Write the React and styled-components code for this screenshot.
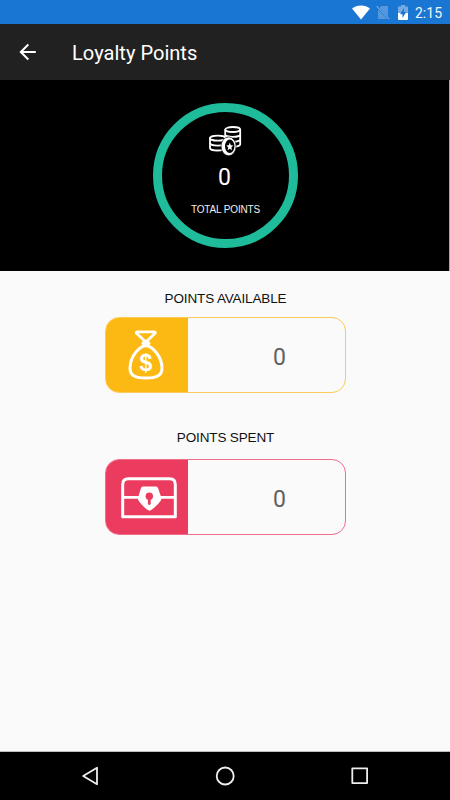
import React from "react";
import styled, { createGlobalStyle } from "styled-components";

const GlobalStyle = createGlobalStyle`
  * {
    box-sizing: border-box;
  }

  body {
    margin: 0;
    background: #fafafa;
  }
`;

export default function App() {
  return (
    <Screen>
      <GlobalStyle />
      <StatusBar>
        <WifiIcon />
        <NoSimIcon />
        <BatteryIcon />
        <Clock>2:15</Clock>
      </StatusBar>

      <AppBar>
        <BackIcon />
        <Title>Loyalty Points</Title>
      </AppBar>

      <Hero>
        <Ring>
          <CoinsIcon />
          <Total>0</Total>
          <TotalLabel>TOTAL POINTS</TotalLabel>
        </Ring>
      </Hero>

      <Content>
        <PointsCard label="POINTS AVAILABLE" value={0} color="#fdb913" line="#fdcb58" gap={9} iconPad="0 1px 1px 0" valueLine={80}>
          <MoneyBagIcon />
        </PointsCard>
        <PointsCard label="POINTS SPENT" value={0} color="#eb3b5f" line="#ee6f8a" gap={12} iconPad="1px 0 0 4px" valueLine={79}>
          <ChestIcon />
        </PointsCard>
      </Content>

      <NavBar>
        <NavIcon>
          <path d="M19 3.8v16.4L5.2 12z" />
        </NavIcon>
        <NavIcon>
          <circle cx="12.2" cy="12" r="8.5" />
        </NavIcon>
        <NavIcon>
          <path d="M4.3 4.3h14.8v14.8H4.3z" />
        </NavIcon>
      </NavBar>
    </Screen>
  );
}

function PointsCard({ label, value, color, line, gap, iconPad, valueLine, children }) {
  return (
    <Group>
      <GroupLabel $gap={gap}>{label}</GroupLabel>
      <Card $line={line}>
        <CardIcon $color={color} $pad={iconPad}>{children}</CardIcon>
        <CardValue $line={valueLine}>{value}</CardValue>
      </Card>
    </Group>
  );
}

// Icons

function WifiIcon() {
  return (
    <svg width="18" height="15" viewBox="0 0 18 15">
      <path d="M0 3.5C5 -.6 13 -.6 18 3.5L9 14.5z" fill="#fff" />
    </svg>
  );
}

function NoSimIcon() {
  return (
    <svg width="14" height="15" viewBox="0 0 14 15">
      <path d="M5.2 1H12v10.8L3.6 3z" fill="#5598de" />
      <path d="M2 4.4L11.3 14H2z" fill="#5598de" />
      <path d="M.6 1.2l12.6 13" stroke="#75abe5" strokeWidth="1.1" />
    </svg>
  );
}

function BatteryIcon() {
  return (
    <svg width="10" height="15" viewBox="0 0 10 15">
      <path d="M3 0h4v1.6h2.2q.8 0 .8.8V8H0V2.4q0-.8.8-.8H3z" fill="#75abe5" />
      <path d="M0 8h10v6q0 1-1 1H1q-1 0-1-1z" fill="#fff" />
      <path d="M6 3L2 9.2h2.5V13L8.2 7H6z" fill="#1976d2" />
    </svg>
  );
}

function BackIcon() {
  return (
    <svg width="18" height="18" viewBox="0 0 18 18" fill="none" stroke="#fff" strokeWidth="2">
      <path d="M16.8 9H2.4M9.3 1.5L1.8 9l7.5 7.5" />
    </svg>
  );
}

function CoinsIcon() {
  return (
    <svg width="33" height="30" viewBox="0 0 33 30" fill="none" stroke="#fff" strokeWidth="1.8">
      <ellipse cx="23.7" cy="3.5" rx="7.5" ry="2.5" />
      <path d="M16.2 3.5v14.8c1.3 1.8 4 2.5 7.5 2.5s7.5-1 7.5-2.5V3.5M16.2 8.4c0 1.4 3.5 2.5 7.5 2.5s7.5-1.1 7.5-2.5M16.2 13.3c0 1.4 3.5 2.5 7.5 2.5s7.5-1.1 7.5-2.5" />
      <path d="M1 12.2v9.7c0 1.5 3.5 2.6 7.8 2.6 4 0 7-1 7.6-2.3V12.2z" fill="#000" />
      <path d="M1 17c0 1.5 3.5 2.6 7.8 2.6s7.8-1.1 7.8-2.6" />
      <ellipse cx="8.8" cy="12.2" rx="7.8" ry="2.5" fill="#000" />
      <ellipse cx="19.6" cy="20.3" rx="7.5" ry="9.4" fill="#fff" stroke="#000" strokeWidth=".6" />
      <ellipse cx="20.7" cy="20.3" rx="4.7" ry="6.7" fill="#000" stroke="none" />
      <path
        d="M20.8 16.6l1 2.7 2.4.2-1.8 2 .6 2.8-2.2-1.5-2.2 1.5.6-2.8-1.8-2 2.4-.2z"
        fill="#fff"
        stroke="none"
      />
    </svg>
  );
}

function MoneyBagIcon() {
  return (
    <svg width="38" height="52" viewBox="0 0 38 52" fill="none" stroke="#fff">
      <path d="M10.2 2.8h17.2q1.4.2.7 1.5L18.9 13 9.5 4.3q-.7-1.3.7-1.5z" strokeWidth="2.8" strokeLinejoin="round" />
      <path
        d="M18.9 16.5c-7.3 1-15.6 11.5-15.9 22.2C2.8 47 9 49 18.9 49s16.3-2 16.1-10.3C34.7 28 26.2 17.5 18.9 16.5z"
        strokeWidth="3"
      />
      <path d="M16.5 14.3h4.8" strokeWidth="4" strokeLinecap="round" />
      <BagSign x="18.9" y="41.5">$</BagSign>
    </svg>
  );
}

function ChestIcon() {
  return (
    <svg width="56" height="42" viewBox="0 0 56 42" fill="none" stroke="#fff">
      <path d="M1.7 39.8V7.5q0-5.8 5.8-5.8h41q5.8 0 5.8 5.8v32.3z" strokeWidth="3" strokeLinejoin="round" />
      <path d="M2 20.4h52" strokeWidth="2.6" />
      <path
        d="M22 9.5h13q1.5 0 2 1.5l3.3 9.5q.4 2-.8 3.5c-2.5 3.5-6 6.7-9.8 9.3q-1.2.7-2.4 0c-4-2.6-7-5.7-9.5-9.3q-1.2-1.5-.7-3.5l2.9-9.5q.5-1.5 2-1.5z"
        fill="#fff"
        stroke="none"
      />
      <circle cx="28.3" cy="19.3" r="3.7" fill="#eb3b5f" stroke="none" />
      <path d="M28.3 20v6.5" stroke="#eb3b5f" strokeWidth="2.8" strokeLinecap="round" />
    </svg>
  );
}

// Styled Components

const Screen = styled.div`
  width: 450px;
  height: 800px;
  display: flex;
  flex-direction: column;
  overflow: hidden;
  background: #fafafa;
  font-family: Roboto, sans-serif;
`;

const StatusBar = styled.div`
  height: 24px;
  flex: none;
  display: flex;
  align-items: center;
  justify-content: flex-end;
  padding: 1px 8px 0 0;
  background: #1976d2;

  svg:nth-child(2) {
    margin-left: 6px;
  }

  svg:nth-child(3) {
    margin-left: 8px;
  }
`;

const Clock = styled.span`
  width: 27px;
  margin-left: 7px;
  color: #f2f7fc;
  font-size: 14px;
  line-height: 22px;
  white-space: nowrap;
`;

const AppBar = styled.header`
  height: 56px;
  flex: none;
  display: flex;
  align-items: center;
  padding-left: 19px;
  background: #212121;

  svg {
    margin-bottom: 1px;
  }
`;

const Title = styled.h1`
  margin: 2px 0 0 35px;
  color: #fff;
  font-size: 20.1px;
  font-weight: 400;
  line-height: 24px;
`;

const Hero = styled.section`
  height: 191px;
  flex: none;
  display: flex;
  justify-content: center;
  padding: 23px 0 0 1px;
  border-right: 1px solid #a8a8a8;
  background: #000;
`;

const Ring = styled.div`
  width: 145px;
  height: 145px;
  display: flex;
  flex-direction: column;
  align-items: center;
  padding-top: 14px;
  border: 9px solid #1fbc9c;
  border-radius: 50%;

  svg {
    flex: none;
  }
`;

const Total = styled.div`
  margin-top: 8px;
  padding-right: 1px;
  color: #fff;
  font-size: 23px;
  line-height: 28px;
`;

const TotalLabel = styled.div`
  margin-top: 12px;
  padding-left: 1px;
  color: #f0f0f0;
  font-family: "Liberation Sans", Arial, sans-serif;
  font-size: 10px;
  letter-spacing: -0.15px;
  line-height: 12px;
  white-space: nowrap;
`;

const Content = styled.main`
  flex: 1;
  display: flex;
  flex-direction: column;
  align-items: center;
  gap: 36px;
  padding-top: 19px;
  border-bottom: 1px solid #bdbdbd;
`;

const Group = styled.section`
  display: flex;
  flex-direction: column;
  align-items: center;
`;

const GroupLabel = styled.h2`
  margin: 0 0 ${(props) => props.$gap}px 1px;
  color: #111;
  font-family: "Liberation Sans", Arial, sans-serif;
  font-size: 13.5px;
  font-weight: 400;
  letter-spacing: -0.14px;
  line-height: 18px;
`;

const Card = styled.div`
  width: 241px;
  height: 76px;
  display: flex;
  margin-left: 1px;
  overflow: hidden;
  border: 1px solid ${(props) => props.$line};
  border-radius: 14px;
`;

const CardIcon = styled.div`
  width: 83px;
  flex: none;
  margin: -1px 0 -1px -1px;
  padding: ${(props) => props.$pad};
  display: flex;
  align-items: center;
  justify-content: center;
  background: ${(props) => props.$color};
`;

const CardValue = styled.div`
  flex: 1;
  padding-left: 26px;
  color: #616161;
  font-size: 23px;
  line-height: ${(props) => props.$line}px;
  text-align: center;
`;

const BagSign = styled.text`
  fill: #fff;
  stroke: none;
  font-family: "Liberation Sans", Arial, sans-serif;
  font-size: 23px;
  font-weight: 700;
  text-anchor: middle;
`;

const NavBar = styled.nav`
  height: 48px;
  flex: none;
  display: flex;
  align-items: center;
  justify-content: center;
  gap: 111px;
  background: #000;
`;

const NavIcon = styled.svg.attrs({ viewBox: "0 0 24 24" })`
  width: 24px;
  height: 24px;
  fill: none;
  stroke: #eee;
  stroke-width: 1.8;
  stroke-linejoin: round;
`;
